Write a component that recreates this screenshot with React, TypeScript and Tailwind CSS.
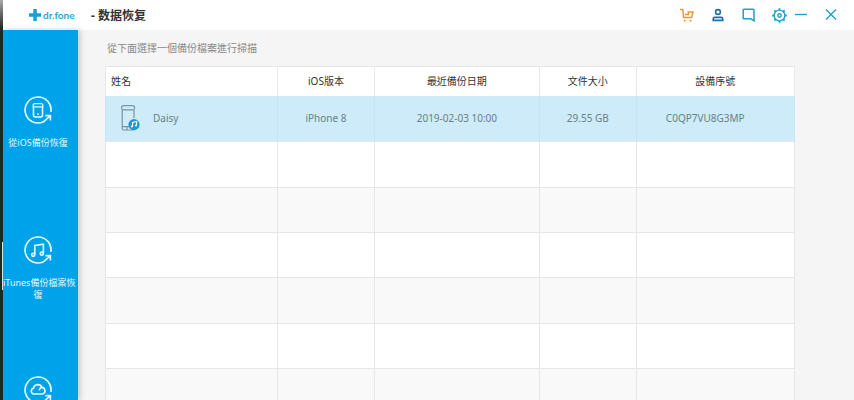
import React from "react";

type IconProps = { children: React.ReactNode };

function SyncRing({ children }: IconProps) {
  return (
    <svg
      width="30"
      height="30"
      viewBox="0 0 30 30"
      fill="none"
      stroke="#e6fbff"
      strokeWidth="1.6"
      aria-hidden="true"
    >
      <path d="M27.9 17A13 13 0 1 0 20.5 26.8L27 21M22.4 20.6H27.4V25.6" />
      {children}
    </svg>
  );
}

const sources = [
  {
    label: "從iOS備份恢復",
    lines: ["從iOS備份恢復"],
    icon: (
      <SyncRing>
        <path d="M10.5 11.8V20.4q0 1.6 1.6 1.6h5.8q1.6 0 1.6-1.6V11.8" />
        <path d="M10.2 11.8h9.6V10q0-1.4-1.4-1.4h-6.8q-1.4 0-1.4 1.4Z" strokeWidth="1.3" />
        <circle cx="15" cy="19.2" r=".9" fill="#e6fbff" stroke="none" />
      </SyncRing>
    ),
  },
  {
    label: "iTunes備份檔案恢復",
    lines: ["iTunes備份檔案恢", "復"],
    icon: (
      <SyncRing>
        <path d="M11.8 19.8V10.4l8.6-1.2v9.2" />
        <circle cx="10.2" cy="19.8" r="1.6" />
        <circle cx="18.8" cy="18.6" r="1.6" />
      </SyncRing>
    ),
  },
  {
    label: "iCloud",
    lines: [],
    icon: (
      <SyncRing>
        <path d="M10.5 19a3 3 0 0 1 0-5.8 4.4 4.4 0 0 1 8.4-.8 3.4 3.4 0 0 1 .8 6.6ZM16.5 15.5a2.6 2.6 0 0 1 2.4-3" />
      </SyncRing>
    ),
  },
];

const columns = [
  { title: "姓名", width: "w-[25%]" },
  { title: "iOS版本", width: "w-[14%]" },
  { title: "最近備份日期", width: "w-[24%]" },
  { title: "文件大小", width: "w-[14%]" },
  { title: "設備序號", width: "w-[23%]" },
];

const emptyRows = [
  "h-[46px] bg-white",
  "h-[45px] bg-[#f9f9f9]",
  "h-[45px] bg-white",
  "h-[46px] bg-[#f9f9f9]",
  "h-[45px] bg-white",
  "h-[45px] bg-[#f9f9f9]",
];

function DeviceIcon() {
  return (
    <svg width="20" height="28" viewBox="0 0 20 28" fill="none" aria-hidden="true">
      <g stroke="#7d939c" strokeWidth="1.2">
        <path d="M2.2 6V24.4q0 1.6 1.6 1.6H12.4q1.6 0 1.6-1.6M14 6v8M2.2 22.6H9M7 22.6V26" />
        <rect x="1.6" y="1.6" width="13" height="4.2" rx="1.8" />
      </g>
      <circle cx="14" cy="20.6" r="5.6" fill="#1c98d6" />
      <path d="M12.6 22.6v-4.2l4-1v4.2" stroke="#fff" strokeWidth="1.1" />
      <circle cx="11.9" cy="22.6" r="1" fill="#fff" />
      <circle cx="15.9" cy="21.6" r="1" fill="#fff" />
    </svg>
  );
}

function HeaderBar() {
  return (
    <header className="flex h-[30px] shrink-0 items-center bg-white pr-[17px] pl-[26px]">
      <svg width="12" height="12" viewBox="0 0 12 12" aria-hidden="true">
        <path d="M4.3 0h3.5v4.2H12v3.6H7.8V12H4.3V7.8H0V4.2h4.3Z" fill="#1a9fd6" />
      </svg>
      <span className="ml-[2px] w-12 font-[Lato,sans-serif] text-[10px] leading-3 font-bold text-[#2ba6d8]">
        dr.fone
      </span>
      <h1 className="pt-px font-['Noto_Sans','Noto_Sans_CJK_SC',sans-serif] text-[12px] leading-4 font-bold text-[#333]">
        - 数据恢复
      </h1>
      <div className="ml-auto flex items-center text-[#1f9fcb]">
        <button type="button" aria-label="Cart" className="mr-[18px] block">
          <svg width="14" height="14" viewBox="0 0 14 14" fill="none" stroke="#e39a35" strokeWidth="1.5">
            <path d="M0 1.4h2.8L3.6 9.6h8L13 4H8.4v2.4H5" />
            <path d="M3.8 12.6h1.8M9.6 12.6h1.8" strokeWidth="1.6" />
          </svg>
        </button>
        <button type="button" aria-label="Account" className="mr-[18px] block">
          <svg width="12" height="14" viewBox="0 0 12 14" fill="none" stroke="#1f6fa9" strokeWidth="1.6">
            <circle cx="6" cy="4" r="2.4" />
            <path d="M1.2 12.4v-1.4q0-1.6 1.6-1.6h6.4q1.6 0 1.6 1.6v1.4Z" />
          </svg>
        </button>
        <button type="button" aria-label="Feedback" className="mr-[17px] block">
          <svg width="13" height="14" viewBox="0 0 13 14" fill="none" stroke="currentColor" strokeWidth="1.5">
            <path d="M2 1.2h9.2q.8 0 .8.8v10.8L8.8 10.8H2q-.8 0-.8-.8V2q0-.8.8-.8Z" />
          </svg>
        </button>
        <button type="button" aria-label="Settings" className="mr-2 block">
          <svg width="15" height="15" viewBox="0 0 15 15" fill="none" stroke="currentColor" strokeWidth="1.4">
            <circle cx="7.5" cy="7.5" r="5.4" />
            <circle cx="7.5" cy="7.5" r="1.7" />
            <path
              d="M7.5 .2v2M7.5 12.8v2M.2 7.5h2M12.8 7.5h2M2.3 2.3l1.4 1.4M11.3 11.3l1.4 1.4M12.7 2.3l-1.4 1.4M3.7 11.3l-1.4 1.4"
              strokeWidth="1.8"
            />
          </svg>
        </button>
        <button type="button" aria-label="Minimize" className="mr-[18px] block">
          <svg width="12" height="12" viewBox="0 0 12 12" stroke="currentColor" strokeWidth="1.4">
            <path d="M0 5.5h12" />
          </svg>
        </button>
        <button type="button" aria-label="Close" className="block">
          <svg width="12" height="12" viewBox="0 0 12 12" stroke="currentColor" strokeWidth="1.4">
            <path d="M1 .5l10 10M11 .5L1 10.5" />
          </svg>
        </button>
      </div>
    </header>
  );
}

function Sidebar() {
  return (
    <nav className="z-10 w-[75px] shrink-0 bg-[#00a2e9] pt-[65px] shadow-[2px_0_6px_rgba(0,0,0,0.2)]">
      {sources.map((source) => (
        <button
          key={source.label}
          type="button"
          aria-label={source.label}
          className="flex h-[140px] w-[70px] flex-col items-center text-[9px] leading-3 text-[#e0f8ff]"
        >
          {source.icon}
          <span className="mt-3 flex w-full flex-col items-center whitespace-nowrap">
            {source.lines.map((line) => (
              <span key={line} className="max-w-full">
                {line}
              </span>
            ))}
          </span>
        </button>
      ))}
    </nav>
  );
}

function BackupTable() {
  return (
    <table className="w-full table-fixed border-collapse border border-[#e6e6e6] text-[10px] leading-4">
      <thead>
        <tr className="h-[29px] bg-white text-[#333]">
          {columns.map((column) => (
            <th
              key={column.title}
              className={`${column.width} border-x border-[#e9e9e9] p-0 text-center font-normal first:pl-[5px] first:text-left`}
            >
              {column.title}
            </th>
          ))}
        </tr>
      </thead>
      <tbody>
        <tr className="h-[46px] bg-[#cdebf8] text-center text-[#6b7f87]">
          <td className="border-x border-[#c6e6f3] p-0">
            <div className="flex items-center gap-[13px] pl-[14px]">
              <DeviceIcon />
              <span>Daisy</span>
            </div>
          </td>
          <td className="border-x border-[#c6e6f3] p-0">iPhone 8</td>
          <td className="border-x border-[#c6e6f3] p-0">2019-02-03 10:00</td>
          <td className="border-x border-[#c6e6f3] p-0">29.55 GB</td>
          <td className="border-x border-[#c6e6f3] p-0 pr-5">C0QP7VU8G3MP</td>
        </tr>
        {emptyRows.map((row, index) => (
          <tr key={index} className={row}>
            {columns.map((column) => (
              <td key={column.title} className="border border-[#e6e6e6] p-0" />
            ))}
          </tr>
        ))}
      </tbody>
    </table>
  );
}

export default function App() {
  return (
    <div className="flex h-screen overflow-hidden bg-[#f5f5f5] font-['Noto_Sans','Noto_Sans_CJK_TC',sans-serif]">
      <div className="flex w-[3px] shrink-0 flex-col bg-[#1d2b2d]">
        <div className="h-[30px] bg-linear-to-b from-[#aaa] to-[#222]" />
        <div className="mt-[212px] ml-auto h-12 w-px bg-[#d8eef5]" />
      </div>
      <div className="flex min-w-0 flex-1 flex-col">
        <HeaderBar />
        <div className="flex min-h-0 flex-1">
          <Sidebar />
          <main className="min-w-0 flex-1 pt-[10px] pr-[59px] pl-[27px]">
            <p className="mb-[10px] pl-[2px] text-[10px] leading-4 text-[#888]">
              從下面選擇一個備份檔案進行掃描
            </p>
            <BackupTable />
          </main>
        </div>
      </div>
    </div>
  );
}
